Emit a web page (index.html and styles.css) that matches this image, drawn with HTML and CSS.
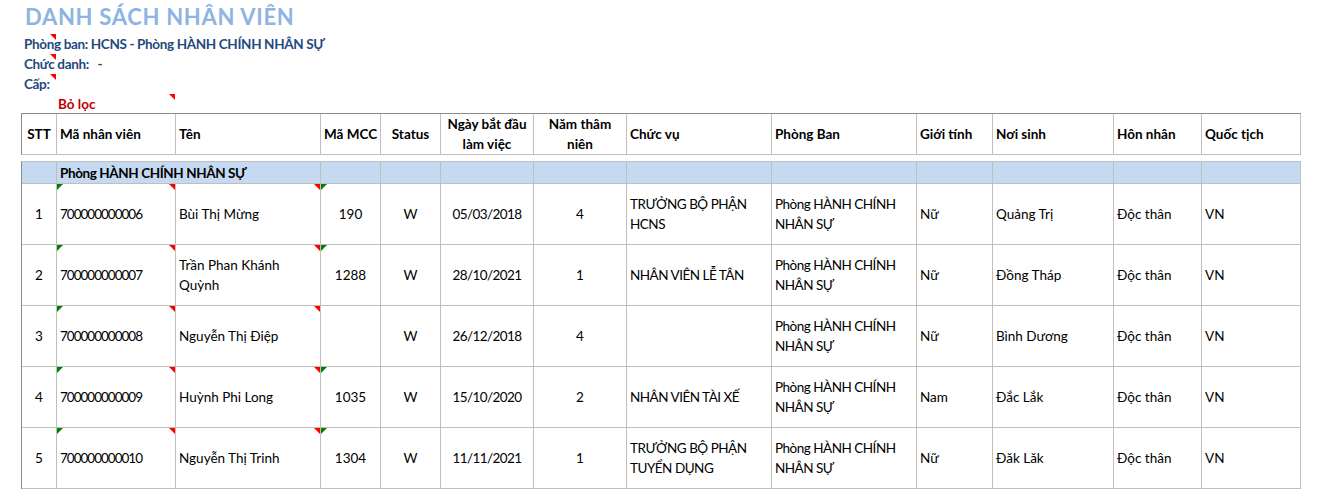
FILE: index.html
```html
<!DOCTYPE html>
<html lang="vi">
<head>
<meta charset="utf-8">
<title>Danh sách nhân viên</title>
<link rel="stylesheet" href="styles.css">
</head>
<body>
<div class="sheet">
  <h1 class="title">DANH SÁCH NHÂN VIÊN</h1>
  <div class="info">
    <div class="info-row mark">Phòng ban: HCNS - Phòng HÀNH CHÍNH NHÂN SỰ</div>
    <div class="info-row mark">Chức danh:&nbsp;&nbsp; -</div>
    <div class="info-row mark">Cấp:</div>
    <div class="info-row filter">Bỏ lọc</div>
  </div>

  <div class="grid head">
    <div class="c center">STT</div>
    <div class="c">Mã nhân viên</div>
    <div class="c">Tên</div>
    <div class="c center">Mã MCC</div>
    <div class="c center">Status</div>
    <div class="c center">Ngày bắt đầu<br>làm việc</div>
    <div class="c center">Năm thâm<br>niên</div>
    <div class="c">Chức vụ</div>
    <div class="c">Phòng Ban</div>
    <div class="c">Giới tính</div>
    <div class="c">Nơi sinh</div>
    <div class="c">Hôn nhân</div>
    <div class="c">Quốc tịch</div>
  </div>

  <div class="grid body">
    <div class="c group"></div>
    <div class="c group span2">Phòng HÀNH CHÍNH NHÂN SỰ</div>
    <div class="c group"></div>
    <div class="c group"></div>
    <div class="c group"></div>
    <div class="c group"></div>
    <div class="c group"></div>
    <div class="c group"></div>
    <div class="c group"></div>
    <div class="c group"></div>
    <div class="c group"></div>
    <div class="c group"></div>

    <div class="c row center">1</div>
    <div class="c row g r id">700000000006</div>
    <div class="c row r">Bùi Thị Mừng</div>
    <div class="c row center g">190</div>
    <div class="c row center">W</div>
    <div class="c row center date">05/03/2018</div>
    <div class="c row center">4</div>
    <div class="c row up">TRƯỞNG BỘ PHẬN<br>HCNS</div>
    <div class="c row up">Phòng HÀNH CHÍNH<br>NHÂN SỰ</div>
    <div class="c row">Nữ</div>
    <div class="c row">Quảng Trị</div>
    <div class="c row">Độc thân</div>
    <div class="c row">VN</div>

    <div class="c row center">2</div>
    <div class="c row g r id">700000000007</div>
    <div class="c row r">Trần Phan Khánh<br>Quỳnh</div>
    <div class="c row center g">1288</div>
    <div class="c row center">W</div>
    <div class="c row center date">28/10/2021</div>
    <div class="c row center">1</div>
    <div class="c row up">NHÂN VIÊN LỄ TÂN</div>
    <div class="c row up">Phòng HÀNH CHÍNH<br>NHÂN SỰ</div>
    <div class="c row">Nữ</div>
    <div class="c row">Đồng Tháp</div>
    <div class="c row">Độc thân</div>
    <div class="c row">VN</div>

    <div class="c row center">3</div>
    <div class="c row g r id">700000000008</div>
    <div class="c row r">Nguyễn Thị Điệp</div>
    <div class="c row center"></div>
    <div class="c row center">W</div>
    <div class="c row center date">26/12/2018</div>
    <div class="c row center">4</div>
    <div class="c row up"></div>
    <div class="c row up">Phòng HÀNH CHÍNH<br>NHÂN SỰ</div>
    <div class="c row">Nữ</div>
    <div class="c row">Bình Dương</div>
    <div class="c row">Độc thân</div>
    <div class="c row">VN</div>

    <div class="c row center">4</div>
    <div class="c row g r id">700000000009</div>
    <div class="c row r">Huỳnh Phi Long</div>
    <div class="c row center g">1035</div>
    <div class="c row center">W</div>
    <div class="c row center date">15/10/2020</div>
    <div class="c row center">2</div>
    <div class="c row up">NHÂN VIÊN TÀI XẾ</div>
    <div class="c row up">Phòng HÀNH CHÍNH<br>NHÂN SỰ</div>
    <div class="c row">Nam</div>
    <div class="c row">Đắc Lắk</div>
    <div class="c row">Độc thân</div>
    <div class="c row">VN</div>

    <div class="c row center">5</div>
    <div class="c row g r id">700000000010</div>
    <div class="c row r">Nguyễn Thị Trinh</div>
    <div class="c row center g">1304</div>
    <div class="c row center">W</div>
    <div class="c row center date">11/11/2021</div>
    <div class="c row center">1</div>
    <div class="c row up">TRƯỞNG BỘ PHẬN<br>TUYỂN DỤNG</div>
    <div class="c row up">Phòng HÀNH CHÍNH<br>NHÂN SỰ</div>
    <div class="c row">Nữ</div>
    <div class="c row">Đăk Lăk</div>
    <div class="c row">Độc thân</div>
    <div class="c row">VN</div>
  </div>
</div>
</body>
</html>
```

FILE: styles.css
```css
* { box-sizing: border-box; }

html, body {
  margin: 0;
  padding: 0;
  background: #ffffff;
}

body {
  font-family: "Lato", "Carlito", "Liberation Sans", sans-serif;
  font-size: 13.5px;
  color: #000000;
}

.sheet {
  width: 1319px;
}

.title {
  margin: 0;
  padding-left: 25px;
  height: 34px;
  line-height: 34px;
  font-size: 22px;
  letter-spacing: 0.7px;
  font-weight: 700;
  color: #8db4e2;
}

.info-row {
  position: relative;
  height: 20px;
  line-height: 20px;
  padding-left: 24px;
  font-weight: 700;
  letter-spacing: -0.35px;
  color: #1f497d;
  white-space: nowrap;
}

.info-row.filter {
  height: 19px;
  padding-left: 58px;
  letter-spacing: 0;
  color: #c00000;
}

.info-row.mark::after,
.info-row.filter::after {
  content: "";
  position: absolute;
  top: 0;
  left: 50px;
  width: 6px;
  height: 6px;
  background: #ff0000;
  clip-path: polygon(0 0, 100% 0, 100% 100%);
}

.info-row.filter::after {
  left: 169px;
}

.grid {
  display: grid;
  grid-template-columns: 35px 119px 145px 60px 60px 93px 93px 145px 145px 76px 121px 88px 99px;
  width: 1280px;
  margin-left: 21px;
  border-left: 1px solid #8c8c8c;
}

.grid.head {
  border-top: 1px solid #8c8c8c;
  grid-auto-rows: 41px;
  font-weight: 700;
}

.grid.body {
  margin-top: 6px;
  border-top: 1px solid #bfbfbf;
  grid-template-rows: 22px;
  grid-auto-rows: 61px;
}

.c {
  position: relative;
  display: flex;
  flex-direction: column;
  justify-content: center;
  align-items: flex-start;
  padding: 0 2px 0 3px;
  line-height: 20px;
  border-right: 1px solid #bfbfbf;
  border-bottom: 1px solid #bfbfbf;
  white-space: nowrap;
}

.c.center {
  align-items: center;
  text-align: center;
  padding: 0 2px;
}

.c.group {
  background: #c5d9f1;
  justify-content: flex-end;
  font-weight: 700;
  letter-spacing: -0.4px;
  line-height: 19px;
}

.c.span2 {
  grid-column: span 2;
}

.c.id {
  letter-spacing: -1px;
}

.c.date {
  letter-spacing: -0.6px;
}

.c.up {
  letter-spacing: -0.5px;
}

.c.g::before {
  content: "";
  position: absolute;
  top: 0;
  left: 0;
  width: 6px;
  height: 6px;
  background: #008000;
  clip-path: polygon(0 0, 100% 0, 0 100%);
}

.c.r::after {
  content: "";
  position: absolute;
  top: 0;
  right: 0;
  width: 6px;
  height: 6px;
  background: #ff0000;
  clip-path: polygon(0 0, 100% 0, 100% 100%);
}
```
